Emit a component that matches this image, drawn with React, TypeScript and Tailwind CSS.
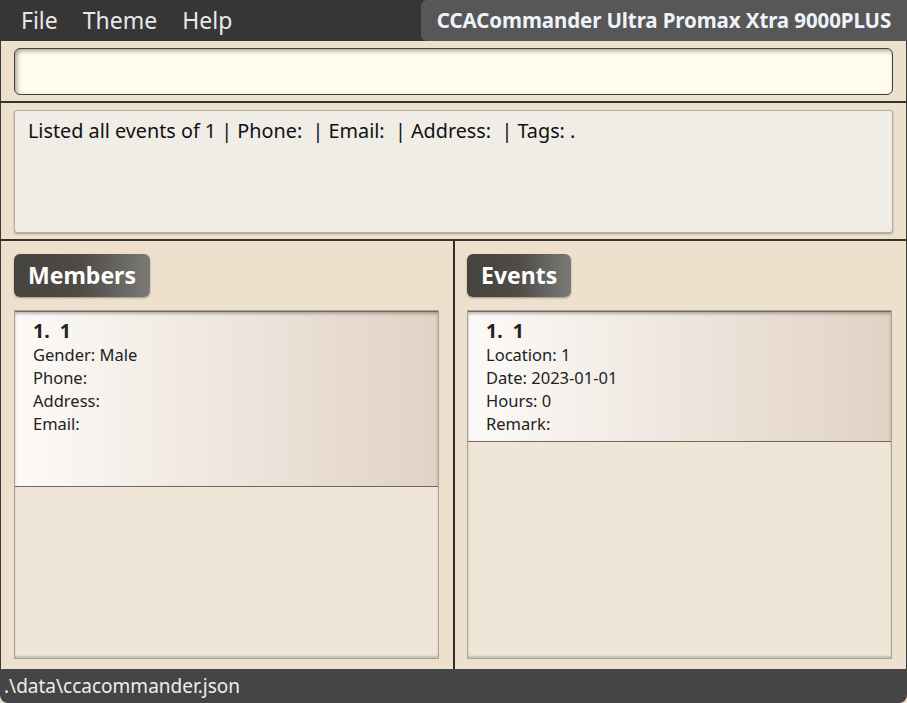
import React from 'react';

const font = { fontFamily: '"Noto Sans", "Open Sans", sans-serif' };

const PanelLabel: React.FC<{ title: string }> = ({ title }) => (
  <div className="inline-flex h-[43px] items-center rounded-[6px] bg-gradient-to-r from-[#46433f] via-[#4f4c48] to-[#7b7a76] px-[14px] shadow-[0_1px_2px_rgba(0,0,0,0.35)]">
    <span className="text-[23px] font-bold leading-none text-white">{title}</span>
  </div>
);

const Card: React.FC<{ title: string; fields: string[]; tall?: boolean }> = ({ title, fields, tall }) => (
  <div
    className={`border-y border-[#6e6a66] bg-gradient-to-r from-[#fcfaf8] to-[#e1d2c4] pl-[18px] pt-[6px] shadow-[inset_0_2px_3px_rgba(0,0,0,0.25)] ${
      tall ? 'h-[176px]' : 'h-[131px]'
    }`}
  >
    <div className="whitespace-pre text-[19.5px] font-bold leading-[25px] text-[#222]">{title}</div>
    {fields.map((f) => (
      <div key={f} className="text-[16.5px] leading-[23px] text-[#222]">
        {f}
      </div>
    ))}
  </div>
);

const ListPanel: React.FC<{ label: string; left: string; children: React.ReactNode }> = ({ label, left, children }) => (
  <div className={`flex flex-1 flex-col pb-[10px] pr-[14px] pt-[13px] ${left}`}>
    <div>
      <PanelLabel title={label} />
    </div>
    <div className="mt-[13px] flex-1 border border-[#aaa196] bg-[#f0e6d8] shadow-[inset_0_-2px_2px_rgba(0,0,0,0.18)]">
      {children}
    </div>
  </div>
);

export default function App() {
  return (
    <div className="flex h-[703px] w-[907px] flex-col overflow-hidden bg-[#ede0cc]" style={font}>
      {/* menu bar */}
      <div className="flex h-[41px] items-stretch bg-[#363636]">
        <div className="flex flex-1 items-center gap-[25px] pl-[21px] text-[23px] text-[#e9e9e9]">
          <span>File</span>
          <span>Theme</span>
          <span>Help</span>
        </div>
        <div className="flex w-[486px] items-center justify-center rounded-bl-[6px] rounded-tl-[6px] bg-[#575757]">
          <span className="text-[20.5px] font-bold tracking-[-0.1px] text-[#eef3fb]">CCACommander Ultra Promax Xtra 9000PLUS</span>
        </div>
      </div>

      {/* command box */}
      <div className="border-x border-b-2 border-x-[#3a3a3a] border-b-[#333] px-[13px] pb-[6px] pt-[7px]">
        <div className="h-[47px] rounded-[6px] border border-[#3e3e3e] bg-[#fffcee] shadow-[inset_2px_2px_4px_rgba(0,0,0,0.35)]" />
      </div>

      {/* result display */}
      <div className="border-x border-b-2 border-x-[#3a3a3a] border-b-[#333] px-[13px] pb-[6px] pt-[7px]">
        <div className="h-[123px] rounded-[3px] border border-[#b1aca4] bg-[#efede6] px-[13px] pt-[5px] shadow-[0_1px_2px_rgba(0,0,0,0.3)]">
          <span className="text-[19.8px] text-[#111]">Listed all events of 1 | Phone:&nbsp; | Email:&nbsp; | Address:&nbsp; | Tags: .</span>
        </div>
      </div>

      {/* lists */}
      <div className="flex flex-1 border-x border-[#3a3a3a]">
        <ListPanel label="Members" left="pl-[13px]">
          <Card title="1.  1" fields={['Gender: Male', 'Phone:', 'Address:', 'Email:']} tall />
        </ListPanel>
        <div className="w-[2px] bg-[#2f2f2f]" />
        <ListPanel label="Events" left="pl-[12px]">
          <Card title="1.  1" fields={['Location: 1', 'Date: 2023-01-01', 'Hours: 0', 'Remark:']} />
        </ListPanel>
      </div>

      {/* status bar */}
      <div className="flex h-[34px] items-center rounded-b-[8px] bg-[#454545] pl-[4px]">
        <span className="text-[19px] text-[#eeeeee]">.\data\ccacommander.json</span>
      </div>
    </div>
  );
}
